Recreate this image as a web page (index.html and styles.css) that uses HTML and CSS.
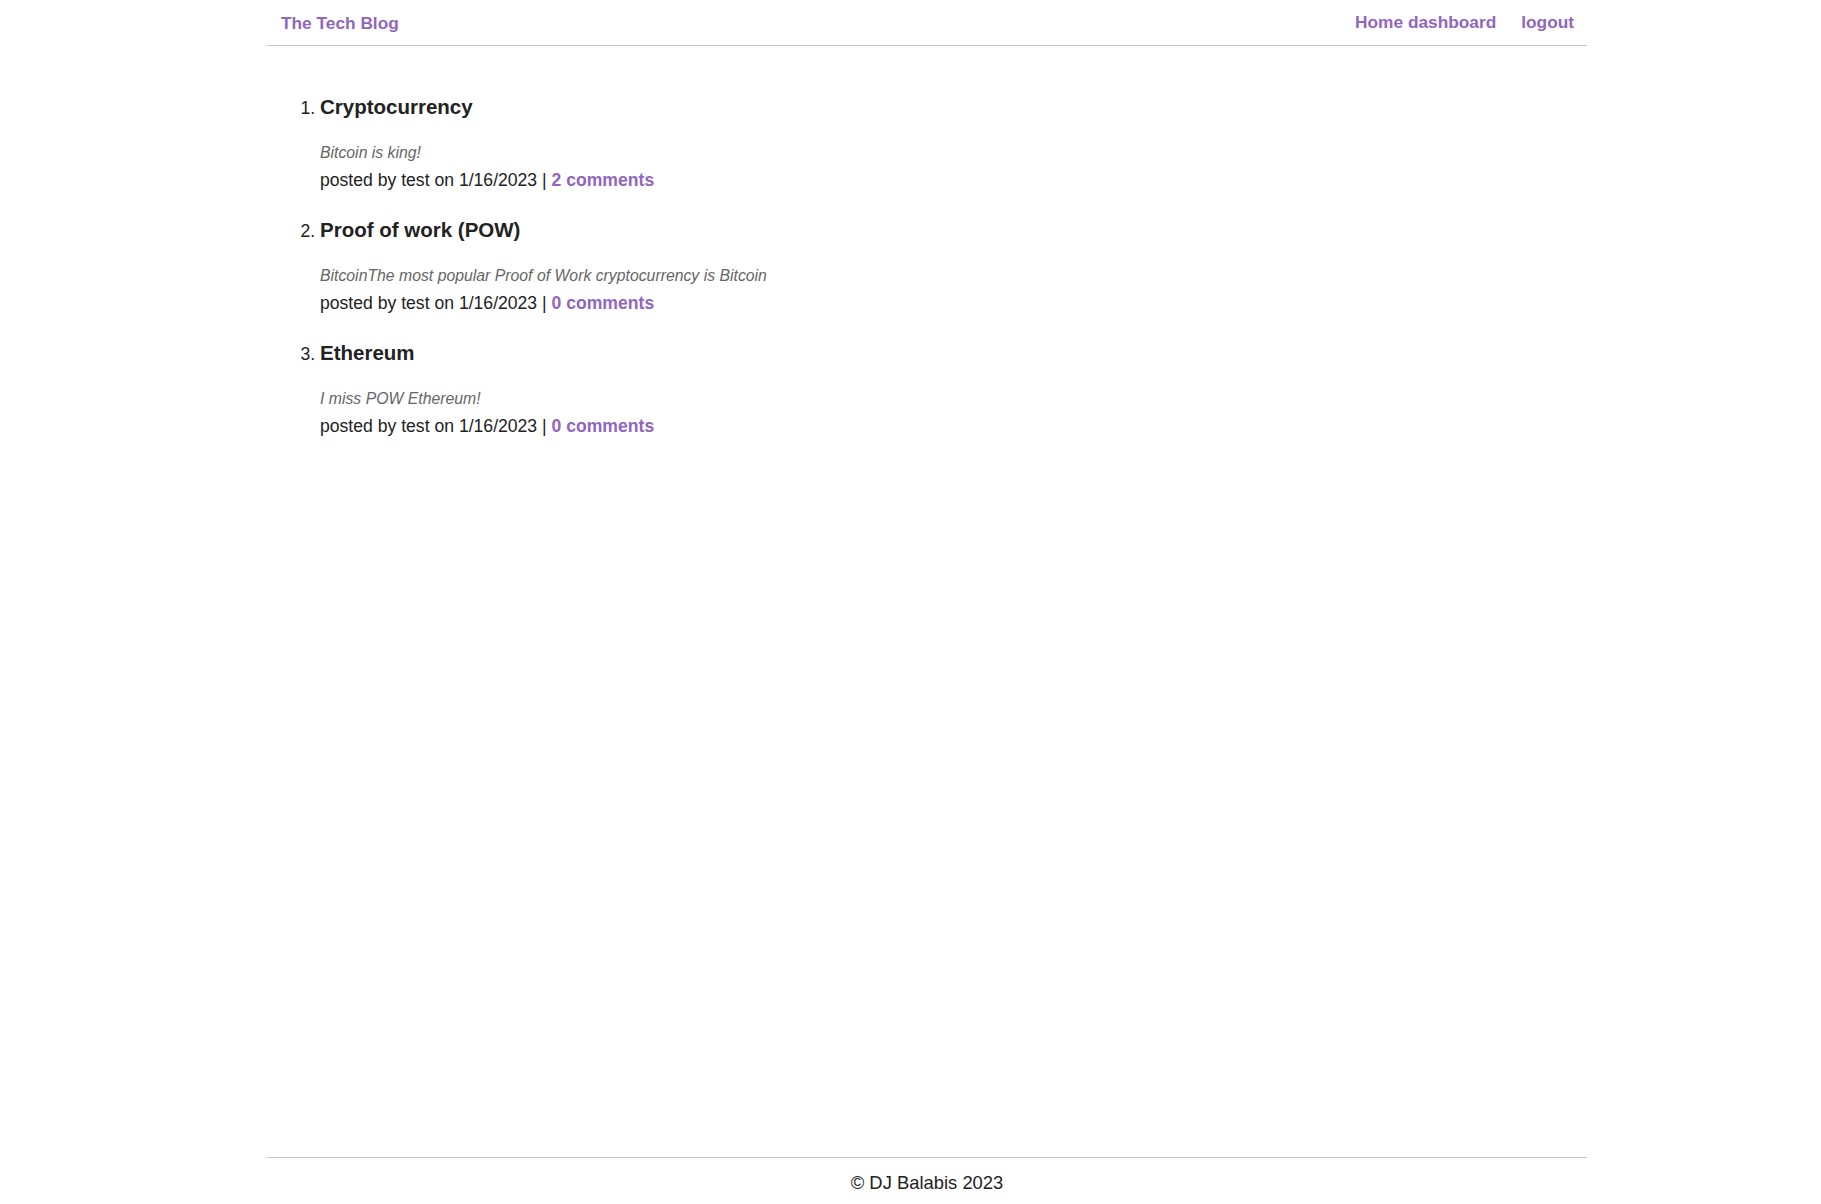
FILE: index.html
```html
<!DOCTYPE html>
<html lang="en">
<head>
<meta charset="utf-8">
<title>The Tech Blog</title>
<link rel="stylesheet" href="styles.css">
</head>
<body>
<div class="page">
  <header class="site-header">
    <a class="brand" href="#">The Tech Blog</a>
    <nav class="nav">
      <a href="#">Home dashboard</a>
      <a href="#">logout</a>
    </nav>
  </header>
  <main class="content">
    <ol class="posts">
      <li class="post">
        <h3 class="post-title">Cryptocurrency</h3>
        <p class="post-body">Bitcoin is king!</p>
        <p class="post-meta">posted by test on 1/16/2023 | <a href="#">2 comments</a></p>
      </li>
      <li class="post">
        <h3 class="post-title">Proof of work (POW)</h3>
        <p class="post-body">BitcoinThe most popular Proof of Work cryptocurrency is Bitcoin</p>
        <p class="post-meta">posted by test on 1/16/2023 | <a href="#">0 comments</a></p>
      </li>
      <li class="post">
        <h3 class="post-title">Ethereum</h3>
        <p class="post-body">I miss POW Ethereum!</p>
        <p class="post-meta">posted by test on 1/16/2023 | <a href="#">0 comments</a></p>
      </li>
    </ol>
  </main>
  <footer class="site-footer">© DJ Balabis 2023</footer>
</div>
</body>
</html>
```
FILE: styles.css
```css
html, body {
  margin: 0;
  padding: 0;
  background: #ffffff;
}
body {
  font-family: "Liberation Sans", Arial, Helvetica, sans-serif;
  font-size: 17.6px;
  color: #222222;
}
a {
  color: #9166be;
  font-weight: bold;
  text-decoration: none;
}
.page {
  width: 1320px;
  margin-left: 267px;
  min-height: 100vh;
  display: flex;
  flex-direction: column;
}
.site-header {
  height: 45px;
  border-bottom: 1px solid #c8c8c8;
  display: flex;
  justify-content: space-between;
  align-items: flex-start;
}
.brand {
  padding-top: 12.5px;
  padding-left: 14px;
  font-size: 17.3px;
  line-height: 20px;
}
.nav {
  padding-top: 11.5px;
  padding-right: 13px;
  display: flex;
  gap: 25px;
  font-size: 17.3px;
  line-height: 20px;
}
.content {
  flex: 1;
}
.posts {
  margin: 0;
  padding: 48.5px 0 0 53px;
}
.post {
  padding-bottom: 28px;
}
.post-title {
  margin: 0;
  font-size: 20.5px;
  line-height: 23.7px;
  font-weight: bold;
  color: #222222;
}
.post-body {
  margin: 25.3px 0 0;
  font-size: 15.8px;
  line-height: 18.2px;
  font-style: italic;
  color: #666666;
}
.post-meta {
  margin: 7.8px 0 0;
  font-size: 17.6px;
  line-height: 20.2px;
  color: #222222;
}
.site-footer {
  border-top: 1px solid #c8c8c8;
  padding: 14px 0 10.7px;
  text-align: center;
  font-size: 18.4px;
  line-height: 21.3px;
  color: #222222;
}
```
